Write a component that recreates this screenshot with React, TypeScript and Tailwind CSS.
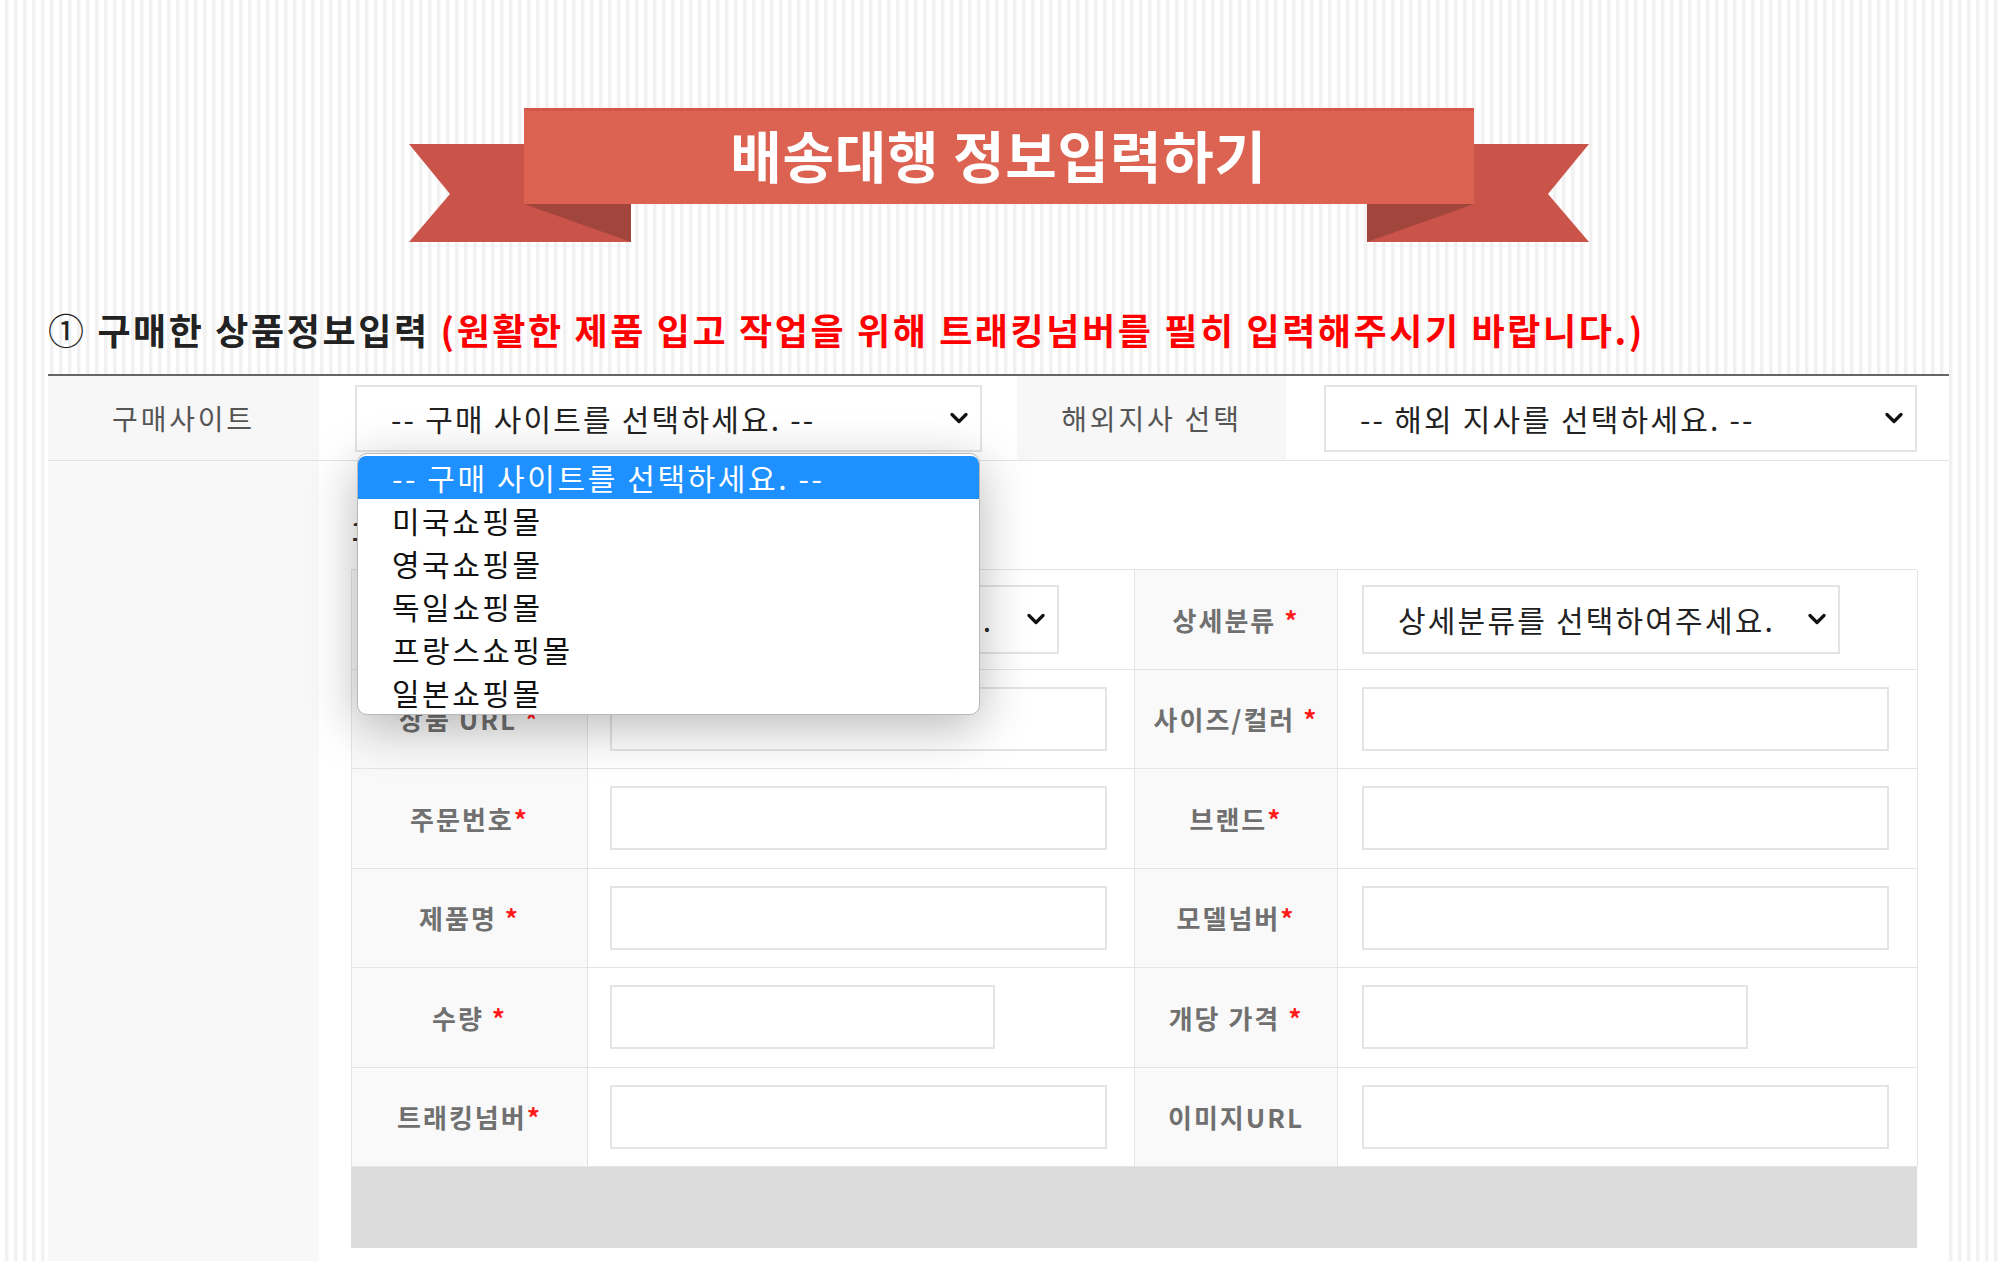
import React from 'react';

const Chevron = () => (
  <svg width="18" height="12" viewBox="0 0 18 12" className="shrink-0">
    <path d="M2 2.5 L9 9.5 L16 2.5" stroke="#111" strokeWidth="3.2" fill="none" strokeLinecap="round" strokeLinejoin="round" />
  </svg>
);

const SelectBox: React.FC<{ text: string; className: string }> = ({ text, className }) => (
  <div className={`flex items-center bg-white border-2 border-[#e4e4e4] pl-[34px] pr-[12px] ${className}`}>
    <span className="flex-1 overflow-hidden whitespace-nowrap text-[30px] text-[#222] leading-[42px] tracking-[2.2px]">{text}</span>
    <Chevron />
  </div>
);

const Star = () => <span className="text-[#ff1a1a]">*</span>;

const Label: React.FC<{ children: React.ReactNode }> = ({ children }) => (
  <div className="flex items-center justify-center bg-[#f9f9f9] border-r border-b border-[#e4e4e4] h-[99.5px] text-[26px] font-bold text-[#707070] tracking-[2px]">
    {children}
  </div>
);

const Field: React.FC<{ children: React.ReactNode; pad: string }> = ({ children, pad }) => (
  <div className={`flex items-center bg-white border-r border-b border-[#e4e4e4] h-[99.5px] ${pad}`}>{children}</div>
);

const Input: React.FC<{ className: string }> = ({ className }) => (
  <div className={`h-[64px] bg-white border-2 border-[#e4e4e4] ${className}`} />
);

const sites = ['미국쇼핑몰', '영국쇼핑몰', '독일쇼핑몰', '프랑스쇼핑몰', '일본쇼핑몰'];

export default function App() {
  return (
    <div className="w-full h-[1261px] overflow-hidden font-['Noto_Sans_CJK_KR','Noto_Sans',sans-serif] bg-[repeating-linear-gradient(90deg,#ffffff_0px,#ffffff_5px,#f1f1f1_5px,#f1f1f1_8px,#ffffff_9px)]">
      <div className="ml-[48px] w-[1901px] pt-[108px]">
        {/* ribbon */}
        <div className="relative mx-auto w-[1180px] h-[134px]">
          <svg width="1180" height="134" viewBox="0 0 1180 134" className="absolute inset-0">
            <polygon points="0,36 222,36 222,134 0,134 41,86" fill="#cb544a" />
            <polygon points="958,36 1180,36 1139,86 1180,134 958,134" fill="#cb544a" />
            <polygon points="115,96 222,96 222,134" fill="#a2453c" />
            <polygon points="958,96 1065,96 958,134" fill="#a2453c" />
            <rect x="115" y="0" width="950" height="96" fill="#dc6352" />
            <rect x="115" y="0" width="950" height="3" fill="#d5574a" />
          </svg>
          <div className="absolute left-[115px] top-0 w-[950px] h-[92px] flex items-center justify-center">
            <span className="text-white text-[56px] font-bold leading-none tracking-[0.8px]">배송대행 정보입력하기</span>
          </div>
        </div>

        {/* heading */}
        <h2 className="mt-[63px] mb-[21px] h-[48px] leading-[48px] text-[36px] font-bold text-[#222] whitespace-nowrap tracking-[2.6px]">
          <span className="font-normal">①</span> 구매한 상품정보입력{' '}
          <span className="text-[#ff0000]">(원활한 제품 입고 작업을 위해 트래킹넘버를 필히 입력해주시기 바랍니다.)</span>
        </h2>

        {/* outer table */}
        <div className="border-t-2 border-[#666]">
          <div className="grid grid-cols-[271px_698px_269px_663px] h-[85px] border-b border-[#e2e2e2]">
            <div className="flex items-center justify-center bg-[#f7f7f7] text-[28px] text-[#555] tracking-[2.8px]">구매사이트</div>
            <div className="flex items-center bg-white pl-[36px]">
              <div className="relative">
                <SelectBox text="-- 구매 사이트를 선택하세요. --" className="w-[627px] h-[67px]" />
                <div className="absolute left-[2px] top-[68px] z-20 w-[623px] bg-white rounded-[10px] overflow-hidden border border-[#b9b9b9] pt-[2px] shadow-[0_12px_50px_rgba(0,0,0,0.28)]">
                  <div className="h-[43px] flex items-center pl-[34px] bg-[#1e90ff] text-white text-[30px] tracking-[2.6px] rounded-t-[8px] whitespace-nowrap">
                    -- 구매 사이트를 선택하세요. --
                  </div>
                  {sites.map(s => (
                    <div key={s} className="h-[43px] flex items-center pl-[34px] text-[30px] text-[#111] tracking-[2.5px]">
                      {s}
                    </div>
                  ))}
                </div>
              </div>
            </div>
            <div className="flex items-center justify-center bg-[#f7f7f7] text-[28px] text-[#555] tracking-[2.8px]">해외지사 선택</div>
            <div className="flex items-center bg-white pl-[38px]">
              <SelectBox text="-- 해외 지사를 선택하세요. --" className="w-[593px] h-[67px]" />
            </div>
          </div>

          <div className="grid grid-cols-[271px_1630px] h-[820px]">
            <div className="bg-[#f8f8f8]" />
            <div className="bg-white pl-[32px] pt-[50px]">
              <div className="h-[38px] leading-[38px] mb-[20px] text-[26px] font-bold text-[#333]">1. 상품정보</div>

              <div className="w-[1566px] grid grid-cols-[236px_547px_203px_580px] border-l border-t border-[#e4e4e4]">
                <Label>대분류 <Star /></Label>
                <Field pad="pl-[22px]">
                  <SelectBox text="대분류를 선택하여주세요." className="w-[449px] h-[69px]" />
                </Field>
                <Label>상세분류&nbsp;<Star /></Label>
                <Field pad="pl-[24px]">
                  <SelectBox text="상세분류를 선택하여주세요." className="w-[478px] h-[69px]" />
                </Field>

                <Label>상품 URL&nbsp;<Star /></Label>
                <Field pad="pl-[22px]"><Input className="w-[497px]" /></Field>
                <Label>사이즈/컬러&nbsp;<Star /></Label>
                <Field pad="pl-[24px]"><Input className="w-[527px]" /></Field>

                <Label>주문번호<Star /></Label>
                <Field pad="pl-[22px]"><Input className="w-[497px]" /></Field>
                <Label>브랜드<Star /></Label>
                <Field pad="pl-[24px]"><Input className="w-[527px]" /></Field>

                <Label>제품명&nbsp;<Star /></Label>
                <Field pad="pl-[22px]"><Input className="w-[497px]" /></Field>
                <Label>모델넘버<Star /></Label>
                <Field pad="pl-[24px]"><Input className="w-[527px]" /></Field>

                <Label>수량&nbsp;<Star /></Label>
                <Field pad="pl-[22px]"><Input className="w-[385px]" /></Field>
                <Label>개당 가격&nbsp;<Star /></Label>
                <Field pad="pl-[24px]"><Input className="w-[386px]" /></Field>

                <Label>트래킹넘버<Star /></Label>
                <Field pad="pl-[22px]"><Input className="w-[497px]" /></Field>
                <Label>이미지URL</Label>
                <Field pad="pl-[24px]"><Input className="w-[527px]" /></Field>
              </div>
              <div className="w-[1566px] h-[81px] bg-[#dcdcdc]" />
            </div>
          </div>
        </div>
      </div>
    </div>
  );
}
